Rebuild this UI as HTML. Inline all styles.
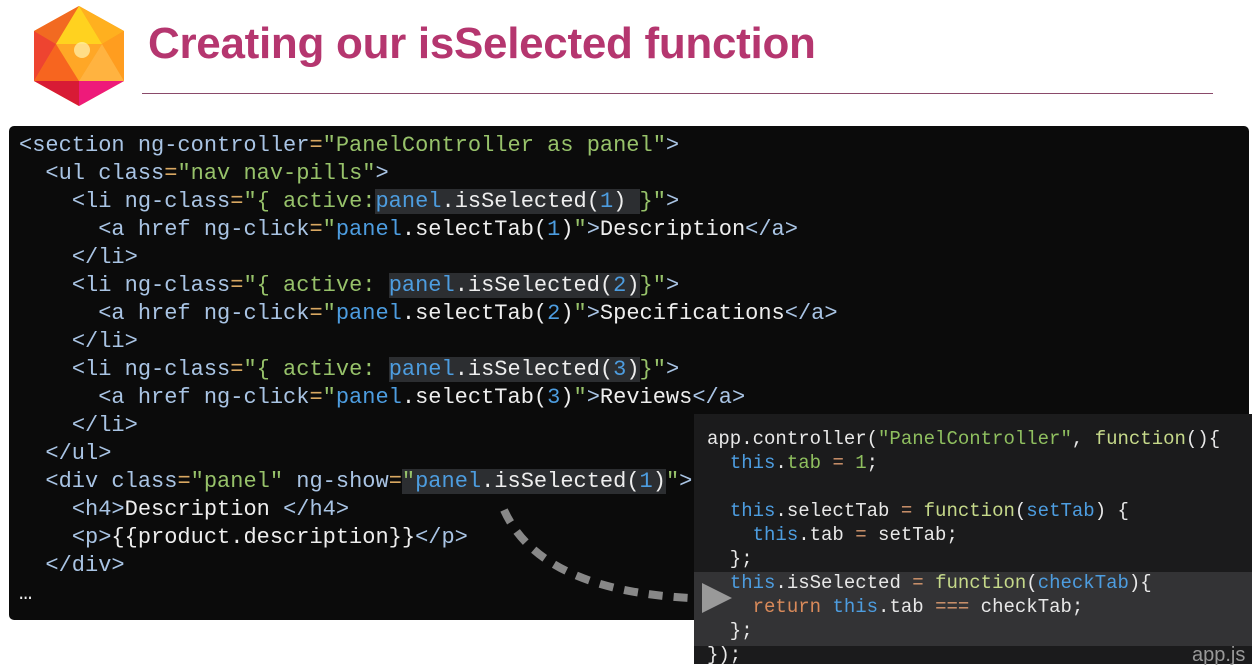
<!DOCTYPE html>
<html><head><meta charset="utf-8"><style>
body{margin:0;width:1252px;height:660px;background:#fff;position:relative;overflow:hidden;font-family:"Liberation Sans",sans-serif}
.title{position:absolute;left:148px;top:19px;font-size:44px;font-weight:bold;color:#b5366f;letter-spacing:-0.3px}
.rule{position:absolute;left:142px;top:93px;width:1071px;height:1px;background:#8a4a6a}
.main{position:absolute;left:9px;top:126px;width:1240px;height:494px;background:#0b0b0b;border-radius:5px}
.l{position:absolute;left:19px;font-family:"Liberation Mono",monospace;font-size:22px;line-height:28px;white-space:pre;color:#eee}
.t{color:#a9c4e4}.s{color:#97c26a}.b{color:#4d9de0}.e{color:#d9a862}
.hl{background:#2c2e31}
.side{position:absolute;left:694px;top:414px;width:560px;height:250px;background:#1b1b1c}
.band{position:absolute;left:694px;top:572px;width:560px;height:74px;background:#333335}
.m{position:absolute;font-family:"Liberation Mono",monospace;font-size:19px;line-height:24px;white-space:pre;color:#e8e8e8}
.k{color:#c6d98a}.g{color:#8fbf5f}.r{color:#d98a5a}.o{color:#d99a70}
</style></head><body>
<svg style="position:absolute;left:30px;top:4px" width="98" height="104" viewBox="0 0 98 104">
<polygon points="49,2 94,27 94,77 49,102 4,77 4,27" fill="#f7941d"/>
<polygon points="49,2 94,27 72,40" fill="#ffb01f"/>
<polygon points="49,2 4,27 26,40" fill="#f26a21"/>
<polygon points="49,2 72,40 26,40" fill="#ffd21f"/>
<polygon points="4,27 26,40 4,77" fill="#ee4430"/>
<polygon points="26,40 4,77 49,77" fill="#f7651f"/>
<polygon points="26,40 72,40 49,77" fill="#ffa726"/>
<polygon points="72,40 94,27 94,77" fill="#ff9d1f"/>
<polygon points="72,40 94,77 49,77" fill="#ffb340"/>
<polygon points="4,77 49,77 49,102" fill="#d81b35"/>
<polygon points="49,77 94,77 49,102" fill="#ee1a7a"/>
<circle cx="52" cy="46" r="8" fill="#fff3b0" opacity=".7"/>
</svg>
<div class="title">Creating our isSelected function</div>
<div class="rule"></div>
<div class="main"></div>
<div class="l" style="top:132px"><span class="t">&lt;section ng-controller</span><span class="e">=</span><span class="s">"PanelController as panel"</span><span class="t">&gt;</span></div>
<div class="l" style="top:160px">  <span class="t">&lt;ul class</span><span class="e">=</span><span class="s">"nav nav-pills"</span><span class="t">&gt;</span></div>
<div class="l" style="top:188px">    <span class="t">&lt;li ng-class</span><span class="e">=</span><span class="s">"{ active:</span><span class="hl"><span class="b">panel</span>.isSelected(<span class="b">1</span>) </span><span class="s">}"</span><span class="t">&gt;</span></div>
<div class="l" style="top:216px">      <span class="t">&lt;a href ng-click</span><span class="e">=</span><span class="s">"</span><span class="b">panel</span>.selectTab(<span class="b">1</span>)<span class="s">"</span><span class="t">&gt;</span>Description<span class="t">&lt;/a&gt;</span></div>
<div class="l" style="top:244px">    <span class="t">&lt;/li&gt;</span></div>
<div class="l" style="top:272px">    <span class="t">&lt;li ng-class</span><span class="e">=</span><span class="s">"{ active: </span><span class="hl"><span class="b">panel</span>.isSelected(<span class="b">2</span>)</span><span class="s">}"</span><span class="t">&gt;</span></div>
<div class="l" style="top:300px">      <span class="t">&lt;a href ng-click</span><span class="e">=</span><span class="s">"</span><span class="b">panel</span>.selectTab(<span class="b">2</span>)<span class="s">"</span><span class="t">&gt;</span>Specifications<span class="t">&lt;/a&gt;</span></div>
<div class="l" style="top:328px">    <span class="t">&lt;/li&gt;</span></div>
<div class="l" style="top:356px">    <span class="t">&lt;li ng-class</span><span class="e">=</span><span class="s">"{ active: </span><span class="hl"><span class="b">panel</span>.isSelected(<span class="b">3</span>)</span><span class="s">}"</span><span class="t">&gt;</span></div>
<div class="l" style="top:384px">      <span class="t">&lt;a href ng-click</span><span class="e">=</span><span class="s">"</span><span class="b">panel</span>.selectTab(<span class="b">3</span>)<span class="s">"</span><span class="t">&gt;</span>Reviews<span class="t">&lt;/a&gt;</span></div>
<div class="l" style="top:412px">    <span class="t">&lt;/li&gt;</span></div>
<div class="l" style="top:440px">  <span class="t">&lt;/ul&gt;</span></div>
<div class="l" style="top:468px">  <span class="t">&lt;div class</span><span class="e">=</span><span class="s">"panel"</span> <span class="t">ng-show</span><span class="e">=</span><span class="hl"><span class="s">"</span><span class="b">panel</span>.isSelected(<span class="b">1</span>)</span><span class="s">"</span><span class="t">&gt;</span></div>
<div class="l" style="top:496px">    <span class="t">&lt;h4&gt;</span>Description <span class="t">&lt;/h4&gt;</span></div>
<div class="l" style="top:524px">    <span class="t">&lt;p&gt;</span>{{product.description}}<span class="t">&lt;/p&gt;</span></div>
<div class="l" style="top:552px">  <span class="t">&lt;/div&gt;</span></div>
<div class="l" style="top:580px">…</div>
<div class="side"></div>
<div class="band"></div>
<div class="m" style="left:707px;top:427px">app.controller(<span class="g">"PanelController"</span>, <span class="k">function</span>(){</div>
<div class="m" style="left:707px;top:451px">  <span class="b">this</span>.<span class="g">tab</span> <span class="o">=</span> <span class="g">1</span>;</div>
<div class="m" style="left:707px;top:499px">  <span class="b">this</span>.selectTab <span class="o">=</span> <span class="k">function</span>(<span class="b">setTab</span>) {</div>
<div class="m" style="left:707px;top:523px">    <span class="b">this</span>.tab <span class="o">=</span> setTab;</div>
<div class="m" style="left:707px;top:547px">  };</div>
<div class="m" style="left:707px;top:571px">  <span class="b">this</span>.isSelected <span class="o">=</span> <span class="k">function</span>(<span class="b">checkTab</span>){</div>
<div class="m" style="left:707px;top:595px">    <span class="r">return</span> <span class="b">this</span>.tab <span class="o">===</span> checkTab;</div>
<div class="m" style="left:707px;top:619px">  };</div>
<div class="m" style="left:707px;top:643px">});</div>
<div style="position:absolute;left:1192px;top:644px;font-size:20px;color:#999">app.js</div>
<svg style="position:absolute;left:0;top:0" width="1252" height="660">
<path d="M504 510 Q540 590 690 598" fill="none" stroke="#888" stroke-width="8" stroke-dasharray="14 11"/>
<polygon points="702,583 732,598 702,613" fill="#999"/>
</svg>
</body></html>
